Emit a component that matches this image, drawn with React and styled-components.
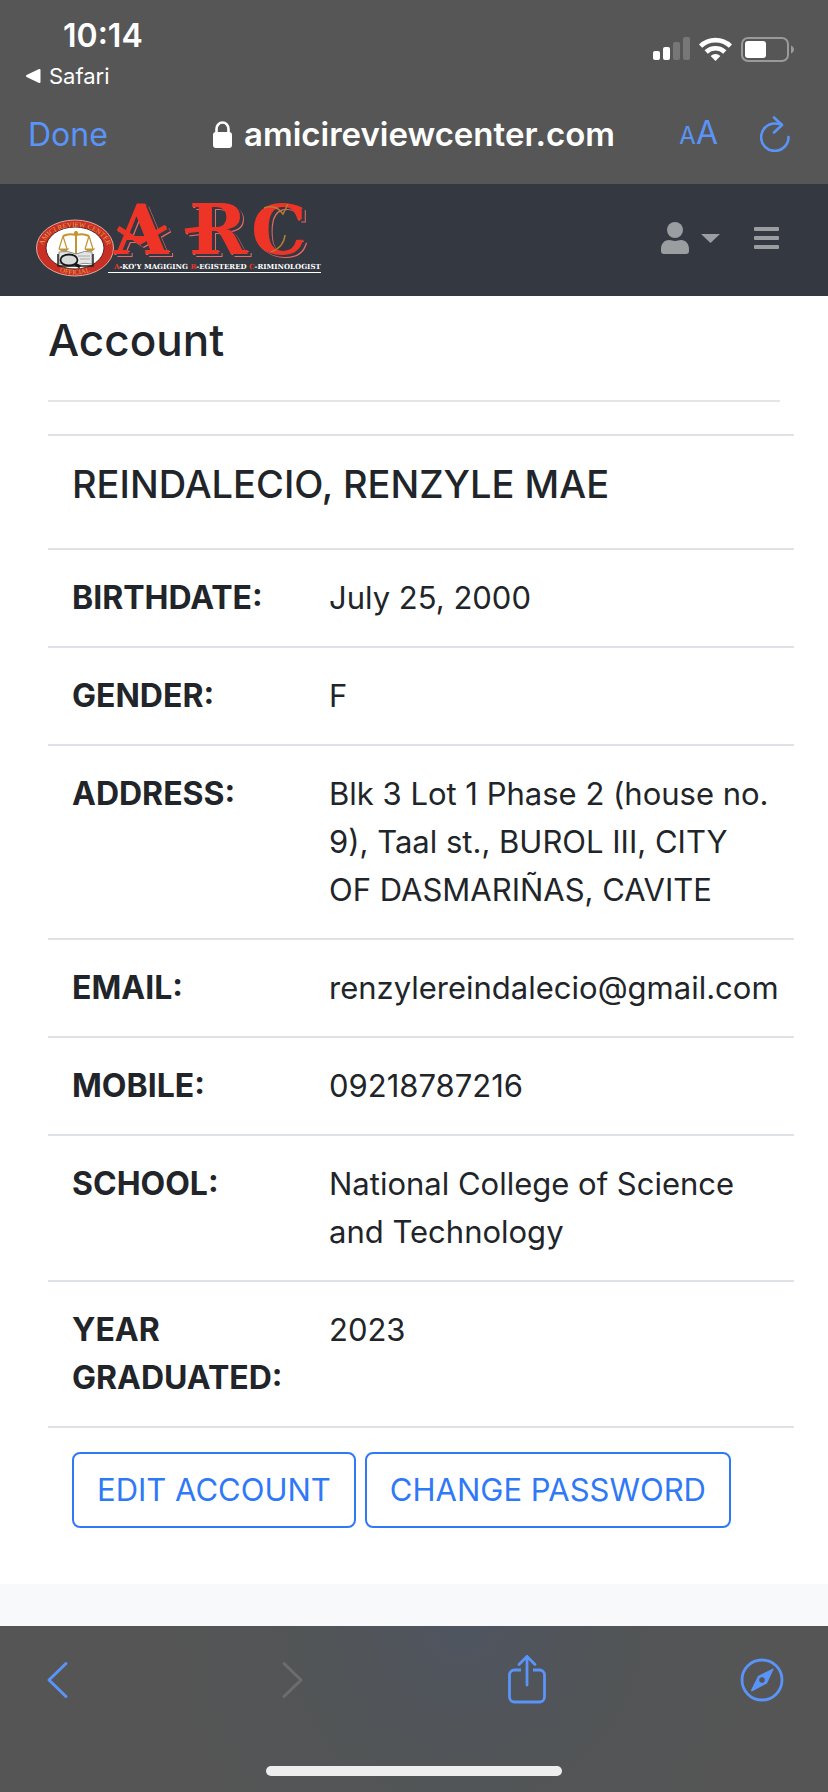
import React from "react";
import styled, { createGlobalStyle } from "styled-components";

const GlobalStyle = createGlobalStyle`
  *, *::before, *::after { box-sizing: border-box; }
  body {
    margin: 0;
    background: #f8f9fb;
    color: #212529;
    font-family: Inter, "Liberation Sans", sans-serif;
  }
`;

const blue = "#5b94f8";

const Screen = styled.div`
  display: flex;
  flex-direction: column;
  min-height: 100vh;
`;

const BrowserHeader = styled.header`
  background: #565656;
  color: #fff;
`;

const StatusBar = styled.div`
  display: flex;
  justify-content: space-between;
  padding: 16px 34px 0 25px;
  height: 96px;
`;

const Time = styled.div`
  padding-left: 38px;
  font-size: 32px;
  line-height: 40px;
  font-weight: 600;
`;

const BackLink = styled.a`
  display: flex;
  align-items: center;
  gap: 8px;
  color: inherit;
  text-decoration: none;
  font-size: 22px;
  line-height: 40px;
`;

const StatusIcons = styled.div`
  display: flex;
  align-items: center;
  gap: 9px;
  height: 66px;
`;

const AddressBar = styled.div`
  display: grid;
  grid-template-columns: 1fr auto 1fr;
  align-items: center;
  height: 88px;
  padding: 0 28px 12px;
`;

const PlainButton = styled.button`
  display: flex;
  align-items: center;
  justify-content: center;
  padding: 0;
  border: 0;
  background: none;
  color: ${(p) => p.$color || blue};
  font: inherit;
  font-size: 32px;
  gap: ${(p) => p.$gap || 0}px;
  cursor: pointer;
  &:disabled { color: #6d6d6d; cursor: default; }
`;

const DoneButton = styled(PlainButton)`
  justify-content: flex-start;
`;

const FooterButton = styled(PlainButton)`
  width: 44px;
  height: 56px;
`;

const Domain = styled.div`
  display: flex;
  align-items: center;
  gap: 12px;
  font-size: 33px;
  line-height: 40px;
  font-weight: 600;
`;

const AddressActions = styled.div`
  display: flex;
  align-items: center;
  justify-content: flex-end;
  gap: 42px;
  padding-right: 10px;
`;

const TextSize = styled.span`
  line-height: 40px;
  font-size: 32px;
  small { font-size: 24px; }
`;

const Navbar = styled.nav`
  display: flex;
  align-items: center;
  justify-content: space-between;
  height: 112px;
  padding: 0 49px 0 36px;
  background: #343840;
`;

const NavActions = styled.div`
  display: flex;
  align-items: center;
  gap: 34px;
  padding-bottom: 4px;
`;

const LogoArt = styled.svg`
  display: block;
`;

const LogoLetters = styled.g`
  font-family: "DejaVu Serif", serif;
  font-weight: 700;
  font-size: 70px;
  fill: #ee3427;
  filter: drop-shadow(3px 2px 0 #343840) drop-shadow(1px 1px 0 #e66a68);
`;

const Page = styled.main`
  padding: 16px 34px 32px 48px;
  background: #fff;
`;

const Title = styled.h1`
  margin: 0 14px 32px 0;
  padding-bottom: 32px;
  border-bottom: 2px solid #e5e5e5;
  font-size: 44px;
  line-height: 56px;
  font-weight: 500;
`;

const Details = styled.table`
  width: 100%;
  table-layout: fixed;
  border-collapse: separate;
  border-spacing: 0;
  font-size: 31px;
  line-height: 48px;
`;

const cell = `
  padding: 24px;
  border-top: 2px solid #dee2e6;
  text-align: left;
  vertical-align: top;
`;

const Label = styled.th`
  ${cell}
  font-size: 32px;
  font-weight: 700;
`;

const Value = styled.td`
  ${cell}
`;

const LabelColumn = styled.col`
  width: 257px;
`;

const Name = styled.h2`
  margin: 0 0 16px;
  font-size: 38px;
  line-height: 48px;
  font-weight: 500;
`;

const ButtonRow = styled.div`
  display: flex;
  gap: 9px;
`;

const OutlineButton = styled.button`
  padding: 12px 23px;
  border: 2px solid #3079f6;
  border-radius: 8px;
  background: #fff;
  color: #3079f6;
  font: inherit;
  white-space: nowrap;
  cursor: pointer;
`;

const Spacer = styled.div`
  flex: 1;
  min-height: 42px;
`;

const BrowserFooter = styled.footer`
  display: flex;
  flex-direction: column;
  justify-content: space-between;
  height: 166px;
  padding: 26px 0 16px;
  background: radial-gradient(circle at 56% 0, #4f5560 0, #525557 150px, #555 300px);
`;

const FooterActions = styled.div`
  display: flex;
  align-items: center;
  justify-content: space-between;
  padding: 0 44px 0 35px;
`;

const HomeIndicator = styled.div`
  align-self: center;
  width: 296px;
  max-width: 50%;
  height: 10px;
  border-radius: 5px;
  background: #eee;
`;

const rows = [
  ["BIRTHDATE:", "July 25, 2000"],
  ["GENDER:", "F"],
  ["ADDRESS:", "Blk 3 Lot 1 Phase 2 (house no. 9), Taal st., BUROL III, CITY OF DASMARIÑAS, CAVITE"],
  ["EMAIL:", "renzylereindalecio@gmail.com"],
  ["MOBILE:", "09218787216"],
  ["SCHOOL:", "National College of Science and Technology"],
  ["YEAR GRADUATED:", "2023"],
];

function Signal() {
  return (
    <svg width="37" height="24" viewBox="0 0 37 24" fill="#fff" aria-label="Signal">
      <rect x="0" y="14" width="7" height="9" rx="2" />
      <rect x="10" y="10" width="7" height="13" rx="2" />
      <rect x="20" y="5" width="7" height="18" rx="2" opacity=".2" />
      <rect x="30" y="0" width="7" height="23" rx="2" opacity=".2" />
    </svg>
  );
}

function Wifi() {
  return (
    <svg width="33" height="24" viewBox="0 0 33 24" fill="none" stroke="#fff" strokeWidth="4.6" aria-label="Wi-Fi">
      <path d="M1.6 9.2a21.4 21.4 0 0 1 29.8 0" />
      <path d="M7.2 15a13.4 13.4 0 0 1 18.6 0" />
      <path d="M11.6 19.1a7 7 0 0 1 9.8 0L16.5 24z" fill="#fff" stroke="none" />
    </svg>
  );
}

function Battery() {
  return (
    <svg width="53" height="25" viewBox="0 0 53 25" aria-label="Battery">
      <rect x="1" y="1" width="46" height="23" rx="6" fill="none" stroke="#9a9a9a" strokeWidth="2" />
      <rect x="4" y="4" width="21" height="17" rx="3" fill="#fff" />
      <path d="M50 8.500c4 1.500 4 6.500 0 8z" fill="#9a9a9a" />
    </svg>
  );
}

function Lock() {
  return (
    <svg width="19" height="27" viewBox="0 0 19 27" aria-hidden="true">
      <rect x="0" y="11" width="19" height="16" rx="3" fill="#fff" />
      <path d="M3.500 12V8a6 6.500 0 0 1 12 0v4" fill="none" stroke="#fff" strokeWidth="2.600" />
    </svg>
  );
}

function Reload() {
  return (
    <svg width="30" height="36" viewBox="0 0 30 36" fill="none" stroke="currentColor" strokeWidth="2.600" strokeLinecap="round" strokeLinejoin="round">
      <path d="M28.500 21a13.700 13.700 0 1 1-13.700-13.500c2.500 0 4.500.3 6.500.8" />
      <path d="M14 1.500 22 9l-8 7.500" />
    </svg>
  );
}

function Logo() {
  return (
    <LogoArt width="290" height="112" viewBox="0 -16 290 112" role="img" aria-label="Amici Review Center">
      <defs>
        <path id="sealTop" d="M6.500 50a32.500 23 0 0 1 65 0" />
        <path id="sealBottom" d="M6 48a33 26.500 0 0 0 66 0" />
      </defs>
      <ellipse cx="39" cy="48" rx="38.500" ry="28" fill="#c92f25" stroke="#e2aaa2" strokeWidth="1" />
      <ellipse cx="39" cy="48" rx="29" ry="21" fill="#fff" stroke="#5b2420" strokeWidth="1" />
      <g fontFamily="'Liberation Serif', serif" fontSize="7" fill="#e3a34c">
        <text><textPath href="#sealTop" startOffset="50%" textAnchor="middle">AMICI REVIEW CENTER</textPath></text>
        <text><textPath href="#sealBottom" startOffset="50%" textAnchor="middle">OFFICIAL</textPath></text>
      </g>
      <g fill="none" stroke="#c5932f" strokeWidth="1.200">
        <path d="M40 31v23M27 36q6-3 13-1 7-2 13 1" strokeWidth="2" />
        <path d="M27 36l-4 13M27 36l4 13M53 36l-4 13M53 36l4 13" />
        <path d="M23 49h9q-4 4-9 0M49 49h9q-4 4-9 0" fill="#c5932f" />
        <circle cx="40" cy="33" r="1.500" fill="#c5932f" />
      </g>
      <path d="M23 52q9-2 17 2 9-4 16-2v12q-8-2-16 1-8-3-17-1z" fill="#e4e5e5" stroke="#8b8d90" />
      <path d="M42 56h12M44 59h10M25 56h7" stroke="#aaa" />
      <path d="M22 54v12h35V54" fill="none" stroke="#222" strokeWidth="1.500" />
      <ellipse cx="33" cy="60" rx="8.500" ry="5.500" fill="#d8dada" stroke="#161616" strokeWidth="1.800" />
      <path d="M39 64l5 3" stroke="#161616" strokeWidth="3" />
      <LogoLetters>
        <text x="78" y="54">A</text>
        <text x="153" y="54">R</text>
        <text x="215" y="54">C</text>
        <path d="M82 28l22 14 26-15" fill="none" stroke="#ee3427" strokeWidth="5" />
        <path d="M149 31l24-3" stroke="#ee3427" strokeWidth="5" />
      </LogoLetters>
      <path d="M228 8q12-4 19 6l5-10M249 35q-1 12-14 17" fill="none" stroke="#b87b35" strokeWidth="1.500" />
      <text x="78" y="69" fontFamily="'DejaVu Serif', serif" fontWeight="700" fontSize="7" fill="#fff">
        <tspan fill="#ee3427">A</tspan>-KO'Y MAGIGING <tspan fill="#ee3427">R</tspan>-EGISTERED <tspan fill="#ee3427">C</tspan>-RIMINOLOGIST
      </text>
      <path d="M72 72.500H285" stroke="#fff" strokeWidth="1.200" />
    </LogoArt>
  );
}

export default function App() {
  return (
    <Screen>
      <GlobalStyle />
      <BrowserHeader>
        <StatusBar>
          <div>
            <Time>10:14</Time>
            <BackLink href="#safari">
              <svg width="16" height="14" viewBox="0 0 16 14" aria-hidden="true">
                <path d="M14.500 1v12L2 7z" fill="#fff" stroke="#fff" strokeWidth="2" strokeLinejoin="round" />
              </svg>
              Safari
            </BackLink>
          </div>
          <StatusIcons>
            <Signal />
            <Wifi />
            <Battery />
          </StatusIcons>
        </StatusBar>
        <AddressBar>
          <DoneButton>Done</DoneButton>
          <Domain><Lock />amicireviewcenter.com</Domain>
          <AddressActions>
            <PlainButton aria-label="Text size"><TextSize><small>A</small>A</TextSize></PlainButton>
            <PlainButton aria-label="Reload"><Reload /></PlainButton>
          </AddressActions>
        </AddressBar>
      </BrowserHeader>

      <Navbar>
        <Logo />
        <NavActions>
          <PlainButton $color="#9a9ea1" $gap={12} aria-label="User menu">
            <svg width="28" height="32" viewBox="0 0 28 32" fill="currentColor">
              <circle cx="14" cy="8" r="8" />
              <path d="M8 18c3 0 3 1 6 1s3-1 6-1c5 0 8 4 8 9v2c0 2-1 3-3 3H3c-2 0-3-1-3-3v-2c0-5 3-9 8-9z" />
            </svg>
            <svg width="19" height="9" viewBox="0 0 19 9" fill="currentColor"><path d="M0 0h19L9.500 9z" /></svg>
          </PlainButton>
          <PlainButton $color="#9a9ea1" aria-label="Menu">
            <svg width="25" height="22" viewBox="0 0 25 22" fill="currentColor">
              <rect width="25" height="4" rx="1" />
              <rect y="9" width="25" height="4" rx="1" />
              <rect y="18" width="25" height="4" rx="1" />
            </svg>
          </PlainButton>
        </NavActions>
      </Navbar>

      <Page>
        <Title>Account</Title>
        <Details>
          <colgroup>
            <LabelColumn />
            <col />
          </colgroup>
          <tbody>
            <tr>
              <Value colSpan={2}><Name>REINDALECIO, RENZYLE MAE</Name></Value>
            </tr>
            {rows.map(([label, value]) => (
              <tr key={label}>
                <Label scope="row">{label}</Label>
                <Value>{value}</Value>
              </tr>
            ))}
            <tr>
              <Value colSpan={2}>
                <ButtonRow>
                  <OutlineButton>EDIT ACCOUNT</OutlineButton>
                  <OutlineButton>CHANGE PASSWORD</OutlineButton>
                </ButtonRow>
              </Value>
            </tr>
          </tbody>
        </Details>
      </Page>
      <Spacer />

      <BrowserFooter>
        <FooterActions>
          <FooterButton aria-label="Back">
            <svg width="23" height="38" viewBox="0 0 23 38" fill="none" stroke="currentColor" strokeWidth="3" strokeLinecap="round" strokeLinejoin="round">
              <path d="M20 2.500 3 19l17 16.500" />
            </svg>
          </FooterButton>
          <FooterButton aria-label="Forward" disabled>
            <svg width="23" height="38" viewBox="0 0 23 38" fill="none" stroke="currentColor" strokeWidth="3" strokeLinecap="round" strokeLinejoin="round">
              <path d="M3 2.500 20 19 3 35.500" />
            </svg>
          </FooterButton>
          <FooterButton aria-label="Share">
            <svg width="38" height="52" viewBox="0 0 38 52" fill="none" stroke="currentColor" strokeWidth="2.800" strokeLinecap="round" strokeLinejoin="round">
              <path d="M13 16H6.500a5 5 0 0 0-5 5v22a5 5 0 0 0 5 5h25a5 5 0 0 0 5-5V21a5 5 0 0 0-5-5H25" strokeLinecap="butt" />
              <path d="M19 31V2.500M11 10.500l8-8 8 8" />
            </svg>
          </FooterButton>
          <FooterButton aria-label="Tabs">
            <svg width="44" height="44" viewBox="0 0 44 44">
              <circle cx="22" cy="22" r="20" fill="none" stroke="currentColor" strokeWidth="2.800" />
              <path fillRule="evenodd" fill="currentColor" d="M32.500 10.800c.8-.5 1.400.1.900.9L27 25.500 12.300 33.200c-1 .5-1.700-.2-1.200-1.200L18 18zM22 19.200a2.800 2.800 0 1 0 0 5.600 2.800 2.800 0 0 0 0-5.600z" />
            </svg>
          </FooterButton>
        </FooterActions>
        <HomeIndicator />
      </BrowserFooter>
    </Screen>
  );
}
